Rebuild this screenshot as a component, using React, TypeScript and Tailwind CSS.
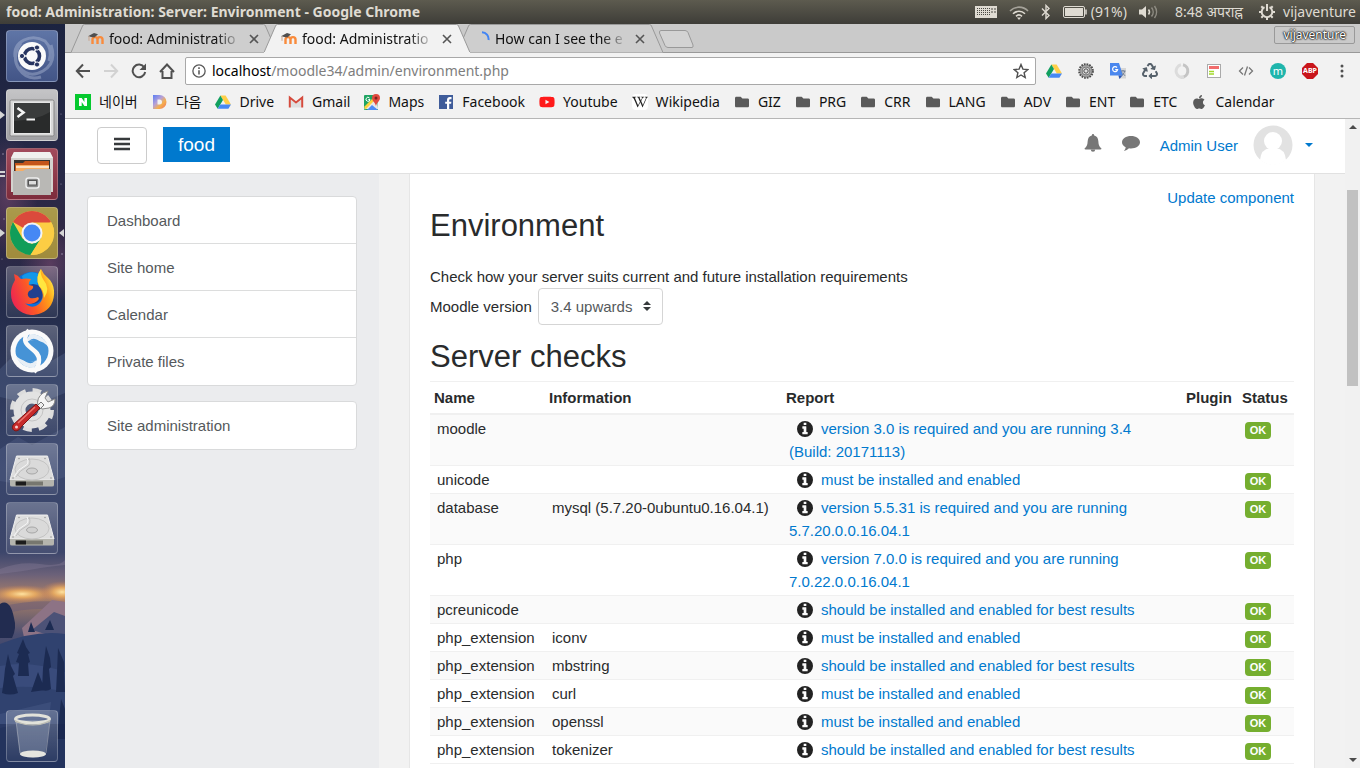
import type { ReactNode } from 'react'
import { FaYoutube, FaFolder, FaApple, FaRecycle, FaWikipediaW } from 'react-icons/fa'

// ── Data ──────────────────────────────────────────────
interface Check {
  name: string
  info?: string
  report: string
}

const CHECKS: Check[] = [
  { name: 'moodle', report: 'version 3.0 is required and you are running 3.4 (Build: 20171113)' },
  { name: 'unicode', report: 'must be installed and enabled' },
  { name: 'database', info: 'mysql (5.7.20-0ubuntu0.16.04.1)', report: 'version 5.5.31 is required and you are running 5.7.20.0.0.16.04.1' },
  { name: 'php', report: 'version 7.0.0 is required and you are running 7.0.22.0.0.16.04.1' },
  { name: 'pcreunicode', report: 'should be installed and enabled for best results' },
  { name: 'php_extension', info: 'iconv', report: 'must be installed and enabled' },
  { name: 'php_extension', info: 'mbstring', report: 'should be installed and enabled for best results' },
  { name: 'php_extension', info: 'curl', report: 'must be installed and enabled' },
  { name: 'php_extension', info: 'openssl', report: 'must be installed and enabled' },
  { name: 'php_extension', info: 'tokenizer', report: 'should be installed and enabled for best results' },
]

const SIDE_LINKS = ['Dashboard', 'Site home', 'Calendar', 'Private files']

// ── Small brand icons ─────────────────────────────────
function NaverIcon() {
  return (
    <svg viewBox="0 0 16 16" className="size-4">
      <rect width="16" height="16" fill="#06c92f" />
      <path d="M4 4h2.7l2.7 4V4H12v8H9.4L6.700 8v4H4z" fill="#fff" />
    </svg>
  )
}

function DaumIcon() {
  return (
    <svg viewBox="0 0 16 16" className="size-4">
      <defs>
        <linearGradient id="daum" x1="0" y1="0" x2="1" y2="1">
          <stop offset="0" stopColor="#5a7ef5" />
          <stop offset=".4" stopColor="#b6a1d8" />
          <stop offset=".65" stopColor="#f5b04d" />
          <stop offset="1" stopColor="#f0705f" />
        </linearGradient>
      </defs>
      <path d="M1 1h6.500a7 7 0 0 1 0 14H1zM5.500 5.500v5h2a2.500 2.500 0 0 0 0-5z" fill="url(#daum)" fillRule="evenodd" />
    </svg>
  )
}

function DriveIcon() {
  return (
    <svg viewBox="0 0 16 16" className="size-4">
      <path d="M5.400 1.500h5.200L16 10.500h-5.200z" fill="#ffcf48" />
      <path d="M5.400 1.500 8 6 2.700 14.800 0 10.500z" fill="#11a05f" />
      <path d="M5.300 10.500H16l-2.600 4.300H2.700z" fill="#4688f4" />
    </svg>
  )
}

function GmailIcon() {
  return (
    <svg viewBox="0 0 16 16" className="size-4">
      <path d="M1 3h14v10.500H1z" fill="#f3f3f3" />
      <path d="M3 13.500V6l5 4 5-4v7.500" fill="#dedede" />
      <path d="M1.800 13.500v-10L8 8.500l6.200-5v10" fill="none" stroke="#d54b3d" strokeWidth="2" />
    </svg>
  )
}

function MapsIcon() {
  return (
    <svg viewBox="0 0 16 16" className="size-4">
      <rect y="1" width="14" height="15" rx="1" fill="#1fa463" />
      <path d="M0 15 13 2l1 13z" fill="#e8e8e8" />
      <path d="m3 16 5-5 6 5z" fill="#4c8bf5" />
      <path d="M0 13 11 2l2 2L1.500 15.500z" fill="#fdd23c" />
      <path d="M12 0a4 4 0 0 1 4 4c0 3-3 4-4 8-1-4-4-5-4-8a4 4 0 0 1 4-4z" fill="#e04a3f" />
      <circle cx="12" cy="4" r="1.500" fill="#7c231d" />
      <path d="M5.500 4a2 2 0 1 0 .5 1.500H4.300" fill="none" stroke="#fff" />
    </svg>
  )
}

function FacebookIcon() {
  return (
    <svg viewBox="0 0 16 16" className="size-4">
      <rect x="1" y="1" width="14" height="14" fill="#3f5c9a" />
      <path d="M13.500 5.300h-1.400c-.6 0-.9.300-.9.900v1.500h2.200l-.3 2.100h-1.900V15H9V9.800H7.200V7.700H9V6c0-1.900 1.100-2.900 2.800-2.900h1.700z" fill="#fff" />
    </svg>
  )
}

function MoodleIcon() {
  return (
    <svg viewBox="0 0 16 16" className="size-4">
      <path d="M4.500 13V8.600a2.500 2.500 0 0 1 5 0V13m0-4.400a2.500 2.500 0 0 1 5 0V13" fill="none" stroke="#f98b3c" strokeWidth="2.400" />
      <path d="M0 5.200 6 2l4 1.200-3.600 3.300-3-.5z" fill="#4f4f4f" />
      <path d="M1 5.200v4.600" stroke="#c9a48d" />
    </svg>
  )
}

function TranslateIcon() {
  return (
    <svg viewBox="0 0 16 16" className="size-4">
      <path d="M6 5h10v10.500H9z" fill="#d6d6d6" />
      <path d="M0 0h9l4 12.500H0z" fill="#4a87ee" />
      <path d="m8.500 12.500 4 0-3 3.500z" fill="#2a56b5" />
      <path d="M7 4.500a2.500 2.500 0 1 0 .6 2.100H5.200" fill="none" stroke="#fff" strokeWidth="1.200" />
      <path d="M11 8h4.500M13 7v1m1.800 0c-.5 2-1.700 3.500-3.100 4.500m.5-3 2.800 3.300" stroke="#6d7b91" fill="none" />
    </svg>
  )
}

const BOOKMARKS: { label: string; icon?: ReactNode }[] = [
  { label: '네이버', icon: <NaverIcon /> },
  { label: '다음', icon: <DaumIcon /> },
  { label: 'Drive', icon: <DriveIcon /> },
  { label: 'Gmail', icon: <GmailIcon /> },
  { label: 'Maps', icon: <MapsIcon /> },
  { label: 'Facebook', icon: <FacebookIcon /> },
  { label: 'Youtube', icon: <FaYoutube className="size-4 text-[#ff1a1a]" /> },
  { label: 'Wikipedia', icon: <FaWikipediaW className="size-4 rounded-sm bg-white text-[#222]" /> },
  { label: 'GIZ' },
  { label: 'PRG' },
  { label: 'CRR' },
  { label: 'LANG' },
  { label: 'ADV' },
  { label: 'ENT' },
  { label: 'ETC' },
  { label: 'Calendar', icon: <FaApple className="size-4 text-[#5a5a5a]" /> },
]

// ── Desktop panel ─────────────────────────────────────
function Panel() {
  return (
    <header className="flex h-6 shrink-0 items-center bg-linear-to-b from-[#5d5b4f] to-[#3e3d38] pr-1 pl-1.5 text-[#dfdbd2]">
      <h1 className="flex-1 truncate text-sm font-bold">food: Administration: Server: Environment - Google Chrome</h1>
      <div className="flex items-center gap-3 text-sm whitespace-nowrap">
        <svg viewBox="0 0 22 14" className="h-3.5 w-[22px]">
          <rect y="1" width="22" height="12" fill="#dfdbd2" />
          <path d="M2 3.500h13M2 5.500h13M2 7.500h13M2 9.500h13" stroke="#4a4943" strokeDasharray="1 1" />
          <path d="M17 3v6M20 3v6" stroke="#4a4943" strokeDasharray="2 1" />
        </svg>
        <svg viewBox="0 0 20 16" className="h-4 w-5" fill="none" strokeWidth="1.600">
          <path d="M1 7a12.500 12.500 0 0 1 18 0" stroke="#a5a299" />
          <path d="M4 9.800a8.500 8.500 0 0 1 12 0M7 12.300a4.500 4.500 0 0 1 6 0" stroke="#dfdbd2" />
          <path d="m8 13.500 2 2.500 2-2.500z" fill="#dfdbd2" />
        </svg>
        <svg viewBox="0 0 10 16" className="h-4 w-2.5" fill="none" stroke="#dfdbd2" strokeWidth="1.400">
          <path d="m1 4.500 7 7L5 14.500v-13l3 3-7 7" />
        </svg>
        <span className="flex items-center gap-1">
          <svg viewBox="0 0 24 12" className="h-3 w-6">
            <rect x=".5" y=".5" width="21" height="11" rx="1.500" fill="none" stroke="#dfdbd2" />
            <rect x="2" y="2" width="18" height="8" fill="#dfdbd2" />
            <path d="M23 3.500v5" stroke="#dfdbd2" strokeWidth="1.500" />
          </svg>
          (91%)
        </span>
        <svg viewBox="0 0 20 14" className="h-3.5 w-5" fill="none">
          <path d="M0 4.500h3l4-3.500v12L3 9.500H0z" fill="#dfdbd2" />
          <path d="M9.500 4.500a4 4 0 0 1 0 5" stroke="#dfdbd2" strokeWidth="1.500" />
          <path d="M12.500 2.500a7 7 0 0 1 0 9M15.500 1a10 10 0 0 1 0 12" stroke="#8f8c83" strokeWidth="1.500" />
        </svg>
        <time className="mx-1">8:48 अपराह्न</time>
        <button type="button" className="flex items-center gap-2">
          <svg viewBox="0 0 16 16" className="size-4" fill="none" stroke="#dfdbd2">
            <path d="M5.500 3.200a5.300 5.300 0 1 0 5 0" strokeWidth="2" />
            <path d="M8 0v7" strokeWidth="2" />
            <path d="M0 8h2M14 8h2M2.300 2.300 4 4M13.700 2.300 12 4M2.300 13.700 4 12M13.700 13.700 12 12M8 14v2" strokeWidth="2" />
          </svg>
          vijaventure
        </button>
      </div>
    </header>
  )
}

// ── Launcher ──────────────────────────────────────────
function Wallpaper() {
  return (
    <svg viewBox="0 0 65 744" preserveAspectRatio="none" className="absolute inset-0 size-full">
      <defs>
        <linearGradient id="sky" x1="0" y1="0" x2="0" y2="1">
          <stop offset="0" stopColor="#1b2340" />
          <stop offset=".2" stopColor="#272947" />
          <stop offset=".28" stopColor="#302845" />
          <stop offset=".38" stopColor="#242c4b" />
          <stop offset=".6" stopColor="#38456b" />
          <stop offset=".71" stopColor="#3d466b" />
          <stop offset=".74" stopColor="#6b6179" />
          <stop offset=".77" stopColor="#a98069" />
          <stop offset=".82" stopColor="#4b4e70" />
          <stop offset=".9" stopColor="#27355f" />
          <stop offset="1" stopColor="#18264a" />
        </linearGradient>
        <radialGradient id="sun">
          <stop offset="0" stopColor="#ffe3a0" />
          <stop offset=".4" stopColor="#f3b25f" stopOpacity=".8" />
          <stop offset="1" stopColor="#c97f55" stopOpacity="0" />
        </radialGradient>
        <radialGradient id="nebula">
          <stop offset="0" stopColor="#6d4468" stopOpacity=".7" />
          <stop offset="1" stopColor="#6d4468" stopOpacity="0" />
        </radialGradient>
      </defs>
      <rect width="65" height="744" fill="url(#sky)" />
      <ellipse cx="8" cy="170" rx="30" ry="60" fill="url(#nebula)" />
      <ellipse cx="50" cy="240" rx="30" ry="40" fill="url(#nebula)" />
      <g fill="#cfc6e0" opacity=".6">
        <circle cx="3" cy="130" r=".8" />
        <circle cx="61" cy="160" r=".6" />
        <circle cx="4" cy="195" r=".7" />
        <circle cx="62" cy="230" r=".8" />
        <circle cx="2" cy="235" r=".6" />
        <circle cx="61" cy="90" r=".6" />
      </g>
      <path d="m0 345 12-12 10 8 14-14 12 12 17-10v40l-30 12-35-8z" fill="#4a5980" opacity=".5" />
      <path d="m0 425 18-12 14 8 33-18v50l-30 10-35-6z" fill="#5c6a92" opacity=".3" />
      <path d="M0 545q20-8 40-5t25-4v5q-20 2-30 4t-35 5z" fill="#857a96" opacity=".4" />
      <ellipse cx="22" cy="570" rx="34" ry="9" fill="url(#sun)" />
      <ellipse cx="62" cy="568" rx="22" ry="11" fill="url(#sun)" />
      <path d="M0 583q30-8 65-5v8q-35-4-65 5z" fill="#6f5f74" opacity=".6" />
      <path d="m22 604 30-28 13 2v36l-40 4z" fill="#8d7385" />
      <path d="m32 606 22-18 11 4v24z" fill="#4c5277" />
      <path d="M0 580q10-6 14 14 3 10-2 20H0z" fill="#222c50" />
      <path d="M0 620q35-14 65-10v134H0z" fill="#30426f" />
      <path d="M0 642q30-6 65 6v20q-30-8-65-4z" fill="#3f5283" opacity=".6" />
      <path d="m0 690 51-12-2 16-49 10z" fill="#40527f" opacity=".7" />
      <path d="m23 615 3 8 4 6-2 1 2 8-2 1 1 13H18l1-13-3-1 3-8-2-1zM8 630l3 12 4 8-2 2 5 17q-8 3-16 0l2-14 1-10zM46 622l4 12 1 9-2 2 2 20q-4 3-9 1l1-22zM58 624l6 14 1 30h-9l1-20zM38 648l4 10 3 8-14 2zM50 596l4 10h-9zM31 598l4 10h-7zM61 675l4 10v30H57z" fill="#1c2b52" />
      <path d="M0 700h65v44H0z" fill="#15234b" opacity=".5" />
    </svg>
  )
}

function Tile({ label, tint, children }: { label: string; tint?: string; children: ReactNode }) {
  return (
    <button
      type="button"
      aria-label={label}
      className={`relative flex size-[52px] shrink-0 items-center justify-center rounded border border-white/25 ${tint ?? 'bg-linear-to-b from-white/25 to-white/5'}`}
    >
      {children}
    </button>
  )
}

function HardDisk() {
  return (
    <svg viewBox="0 0 48 48" className="size-12">
      <path d="M8.500 11h31L46 35H2z" fill="#dedede" stroke="#efefef" />
      <path d="M2 35h44v5q0 1.500-2 1.500H4q-2 0-2-1.500z" fill="#b5b5ae" />
      <path d="M7 36.500h28v4H7z" fill="#77776f" />
      <path d="M8 36.500h10v4H8z" fill="#1c1c1c" />
      <ellipse cx="24" cy="24.500" rx="17" ry="10.500" fill="#dadada" stroke="#c4c4c4" />
      <path d="M19 13q3 6-3 8.500T6 32" fill="none" stroke="#f7f7f7" />
      <path d="M21 13q3 7-3 9.500T8 32" fill="none" stroke="#c0c0c0" />
      <ellipse cx="24" cy="26" rx="5.500" ry="3" fill="#d0d0d0" stroke="#a8a8a8" />
      <g fill="#999">
        <circle cx="11" cy="13.500" r=".8" />
        <circle cx="37" cy="13.500" r=".8" />
        <circle cx="5" cy="33" r=".8" />
        <circle cx="43" cy="33" r=".8" />
      </g>
    </svg>
  )
}

function RunningMark({ children }: { children: ReactNode }) {
  return <span className="absolute top-5 -left-[7px] text-[#d5d5d5]">{children}</span>
}

function Launcher() {
  const arrow = (
    <svg viewBox="0 0 5 10" className="h-2.5 w-[5px]">
      <path d="m0 1 5 4-5 4z" fill="currentColor" />
    </svg>
  )
  return (
    <nav aria-label="Launcher" className="relative flex w-[65px] shrink-0 flex-col gap-[7px] overflow-hidden px-1.5 pt-1.5 pb-1.5">
      <Wallpaper />
      <Tile label="Dash" tint="bg-linear-to-b from-[#5f75a6] to-[#435587]">
        <svg viewBox="0 0 50 50" className="size-[50px]">
          <g fill="none" stroke="#b9c4dd" strokeWidth="3" opacity=".4">
            <path d="M8 26C6 10 24 2 38 10q8 8 4 20" />
            <path d="M14 12Q4 26 12 38t22 8" />
            <path d="M12 36q10 12 24 4t8-26" />
          </g>
          <circle cx="25" cy="25" r="14" fill="#fafafa" />
          <circle cx="25" cy="25" r="7.500" fill="none" stroke="#273460" strokeWidth="3.600" />
          <path d="M25 25h-10M25 25l5-9M25 25l5 9" stroke="#fafafa" strokeWidth="1.500" />
          <circle cx="25" cy="25" r="4.500" fill="#fafafa" />
          <g fill="#273460" stroke="#fafafa">
            <circle cx="15" cy="25" r="2.600" />
            <circle cx="30" cy="16.500" r="2.600" />
            <circle cx="30" cy="33.500" r="2.600" />
          </g>
        </svg>
      </Tile>
      <Tile label="Terminal" tint="bg-linear-to-b from-[#c4c4c6] to-[#a0a0a3]">
        <svg viewBox="0 0 50 50" className="size-[50px]">
          <rect x="3" y="10" width="44" height="36" rx="1.500" fill="#d9d9d9" stroke="#858585" />
          <rect x="6" y="12.500" width="38" height="31" fill="#f1f1f1" />
          <rect x="7" y="13" width="36" height="30" fill="#292b2b" />
          <path d="M7 13h36v9Q30 30 7 31z" fill="#4b4e4d" opacity=".5" />
          <path d="m10.500 18 6 4.500-6 4.500" fill="none" stroke="#f5f5f5" strokeWidth="2.600" />
          <path d="M19.500 29.500h8.500" stroke="#f5f5f5" strokeWidth="2" />
        </svg>
        <RunningMark>{arrow}</RunningMark>
      </Tile>
      <Tile label="Files" tint="bg-linear-to-b from-[#a24b5c] to-[#7d2c3c]">
        <svg viewBox="0 0 50 50" className="size-[50px]">
          <path d="M7 3h36l3 6v34H4V9z" fill="#d4d3cf" />
          <path d="M7 3h36l3 6H4z" fill="#f0f0ee" />
          <path d="M7 11h36v12H7z" fill="#37332f" />
          <path d="M8 14h8l2-2h24v10H8z" fill="#c4551a" />
          <path d="M9 16h33v6H9z" fill="#f6ae66" />
          <path d="M9 18h33" stroke="#fff3e4" strokeWidth="1.500" />
          <path d="M6 22h10l3-2h25v26H6z" fill="#b9b8b5" />
          <rect x="19" y="29" width="13" height="10" rx="2.500" fill="#888" stroke="#eee" strokeWidth="1.500" />
          <rect x="21.500" y="31.500" width="8" height="4.500" fill="#ddd" stroke="#555" />
        </svg>
        <RunningMark>
          <svg viewBox="0 0 5 10" className="h-2.5 w-[5px]">
            <path d="M0 3h5M0 7h5" stroke="currentColor" strokeWidth="2" />
          </svg>
        </RunningMark>
      </Tile>
      <Tile label="Google Chrome" tint="bg-linear-to-b from-[#aa9a4b] to-[#a08b3c]">
        <svg viewBox="0 0 50 50" className="size-[50px]">
          <circle cx="25" cy="25" r="22" fill="#fccd44" />
          <path d="M25 25 6 14A22 22 0 0 1 44 14z" fill="#db4a3c" />
          <path d="M6 14a22 22 0 0 0 17.500 33L34.500 29.500 25 36 15.500 30.500z" fill="#109d59" />
          <path d="M25 14.500h19.500A22 22 0 0 1 23.500 47L34.300 30z" fill="#fccd44" />
          <circle cx="25" cy="25" r="10.500" fill="#f4f4f4" />
          <circle cx="25" cy="25" r="8.500" fill="#4688f4" />
        </svg>
        <RunningMark>{arrow}</RunningMark>
        <span className="absolute top-5 -right-[7px] rotate-180 text-[#d5d5d5]">{arrow}</span>
      </Tile>
      <Tile label="Firefox">
        <svg viewBox="0 0 50 50" className="size-[50px]">
          <defs>
            <linearGradient id="fox" x1="0" y1=".6" x2="1" y2=".2">
              <stop offset="0" stopColor="#ee2750" />
              <stop offset=".4" stopColor="#fb5a26" />
              <stop offset=".75" stopColor="#ffa318" />
              <stop offset="1" stopColor="#fff24a" />
            </linearGradient>
          </defs>
          <circle cx="25" cy="24" r="19" fill="#0a70dd" />
          <path d="M15 9q10-7 18-1l-3 11-12 2z" fill="#18b3f2" opacity=".6" />
          <circle cx="26" cy="27" r="10" fill="#22408f" />
          <path d="M34 2q2 5 7 9c7 6 8 18 3 27-5 8-14 10-20 10C12 47 4 38 4 27c0-7 2-10 4-14l-1-6q4 1 7 5 5-1 10 0-3 4-2 6l4 1q1 3-4 5-3 4 1 7 4 1 8-1 3 2-4 6-6 2-9 0 7 7 14 1c6-6 4-12 0-18q-4-9 2-17z" fill="url(#fox)" />
          <path d="M34 2q-6 8-2 17 5 4 5 12 7-9-1-19-3-5-2-10z" fill="#ffe63f" />
        </svg>
      </Tile>
      <Tile label="Simplenote">
        <svg viewBox="0 0 50 50" className="size-[50px]">
          <circle cx="25" cy="25" r="21.500" fill="#fafafa" />
          <circle cx="25" cy="25" r="16.500" fill="#4693d6" />
          <path d="M22 4C9 22 33 21 32 34q0 6-5 12" fill="none" stroke="#fafafa" strokeWidth="4.500" />
          <path d="M7 27q8 12 25 7l-5 8q-14 0-20-15zM43 23q-8-12-25-7l5-8q14 0 20 15z" fill="#fafafa" opacity=".9" />
          <path d="M14 31q6 5 14 4-6 6-14-4zM36 19q-6-5-14-4 6-6 14 4z" fill="#4693d6" />
        </svg>
      </Tile>
      <Tile label="System Settings">
        <svg viewBox="0 0 50 50" className="size-[50px]">
          <circle cx="25" cy="25" r="18.500" fill="none" stroke="#dcdcdc" strokeWidth="7" strokeDasharray="8 6.530" />
          <circle cx="25" cy="25" r="12.500" fill="none" stroke="#e2e2e2" strokeWidth="12" />
          <circle cx="25" cy="25" r="11" fill="none" stroke="#c4c4c4" />
          <path d="M31 21q-2-8 5-13l5-2-3 7 3 4 7-3q0 7-6 9l-7 1z" fill="#f5f5f5" stroke="#888" />
          <path d="m34 17-5 5-1 4 4-1 5-5z" fill="#eee" stroke="#777" />
          <path d="M29 19 6 40q-2 5 3 6 3 0 6-5l18-18z" fill="#c62a2a" stroke="#801414" />
          <path d="M28 22 11 38" stroke="#eb7770" strokeWidth="1.500" />
          <circle cx="9.500" cy="42" r="1.500" fill="#f5d0d0" />
        </svg>
      </Tile>
      <Tile label="Disk 1"><HardDisk /></Tile>
      <Tile label="Disk 2"><HardDisk /></Tile>
      <div className="flex-1" />
      <Tile label="Trash">
        <svg viewBox="0 0 50 50" className="size-[50px]">
          <path d="M9 9h34l-5 35q-12 5-25 0z" fill="#aab4c8" opacity=".35" />
          <ellipse cx="26" cy="43" rx="13" ry="3.500" fill="#e5e5df" />
          <path d="m9 10 4 32M43 10l-4 32" stroke="#dcdcdc" opacity=".4" />
          <ellipse cx="25.500" cy="8" rx="17" ry="4" fill="none" stroke="#e2e2da" strokeWidth="3" />
          <path d="M8 9q17 9 35 0v2q-17 7-35 0z" fill="#bdbdb4" />
        </svg>
      </Tile>
    </nav>
  )
}

// ── Browser chrome ────────────────────────────────────
function Tab({ title, icon, active }: { title: string; icon: ReactNode; active?: boolean }) {
  return (
    <div role="tab" aria-selected={!!active} className={`relative -mr-[13px] flex h-[29px] w-[206px] items-center pr-[17px] pl-[17px] ${active ? 'z-10' : ''}`}>
      <svg viewBox="0 0 206 29" className="absolute inset-0 size-full">
        <path d="M0 28.500 11.500 2q.5-1.500 2-1.500h179q1.500 0 2 1.500L206 28.500" fill={active ? '#f2f2f2' : '#cecece'} stroke="#999" />
        {active && <path d="M0 29h206" stroke="#f2f2f2" strokeWidth="2" />}
      </svg>
      <span className="relative size-4 shrink-0">{icon}</span>
      <span className="relative ml-[5px] flex-1 mask-r-from-80% text-sm whitespace-nowrap text-[#111]">{title}</span>
      <button type="button" aria-label="Close tab" className="relative ml-1.5 flex size-3 items-center justify-center">
        <svg viewBox="0 0 10 10" className="size-2.5">
          <path d="m1 1 8 8M9 1 1 9" stroke="#555" strokeWidth="1.600" />
        </svg>
      </button>
    </div>
  )
}

function TabStrip() {
  return (
    <div className="flex h-[29px] items-start border-b border-[#999] bg-[#cacaca]">
      <div role="tablist" className="flex pl-1.5">
        <Tab title="food: Administratio" icon={<MoodleIcon />} />
        <Tab title="food: Administratio" icon={<MoodleIcon />} active />
        <Tab
          title="How can I see the e"
          icon={
            <svg viewBox="0 0 16 16" className="size-4">
              <path d="M8 1.200A6.800 6.800 0 0 1 14.500 9" fill="none" stroke="#4285f4" strokeWidth="2" />
            </svg>
          }
        />
      </div>
      <button type="button" aria-label="New tab" className="mt-1.5 ml-2">
        <svg viewBox="0 0 36 18" className="h-[18px] w-9">
          <path d="M3 .5h24q2 0 3 2l5 12.500q.5 2.500-1 2.500H10q-2 0-3-2L1.500 3Q1 .5 3 .5z" fill="#d3d3d3" stroke="#999" />
        </svg>
      </button>
      <div className="flex-1" />
      <button type="button" className="mt-0.5 mr-[5px] h-[18px] rounded-xs border border-[#999] px-2 text-xs leading-4 text-white [text-shadow:0_0_1px_#000,0_0_2px_#000,0_0_2px_#000]">
        vijaventure
      </button>
    </div>
  )
}

function IconButton({ label, narrow, children }: { label: string; narrow?: boolean; children: ReactNode }) {
  return (
    <button type="button" aria-label={label} className={`flex h-7 shrink-0 items-center justify-center ${narrow ? 'w-7' : 'w-8'}`}>
      {children}
    </button>
  )
}

function Toolbar() {
  return (
    <div className="flex items-center bg-[#f2f2f2] pt-1 pr-0.5 pl-1">
      <IconButton label="Back" narrow>
        <svg viewBox="0 0 16 16" className="size-4" fill="none" stroke="#505050" strokeWidth="2">
          <path d="M15 8H2M8 1.500 1.800 8 8 14.500" />
        </svg>
      </IconButton>
      <IconButton label="Forward" narrow>
        <svg viewBox="0 0 16 16" className="size-4" fill="none" stroke="#d2d2d2" strokeWidth="2">
          <path d="M1 8h13M8 1.500 14.200 8 8 14.500" />
        </svg>
      </IconButton>
      <IconButton label="Reload" narrow>
        <svg viewBox="0 0 16 16" className="size-4" fill="none" stroke="#505050" strokeWidth="2">
          <path d="M13.300 4.500A6.300 6.300 0 1 0 14.200 9" />
          <path d="M15 .5V7H8.500z" fill="#505050" stroke="none" />
        </svg>
      </IconButton>
      <IconButton label="Home" narrow>
        <svg viewBox="0 0 16 16" className="size-4" fill="none" stroke="#505050" strokeWidth="2">
          <path d="M1 9 8 1.500 15 9M3.500 8v7h9V8" />
        </svg>
      </IconButton>
      <label className="ml-1 flex h-7 flex-1 items-center rounded-xs border border-[#a8a8a8] bg-white px-1.5">
        <svg viewBox="0 0 16 16" className="size-3.5 shrink-0" fill="none" stroke="#5a5a5a">
          <circle cx="8" cy="8" r="7" strokeWidth="1.500" />
          <path d="M8 7v5M8 3.800v1.800" strokeWidth="1.800" />
        </svg>
        <span className="relative ml-1.5 flex-1">
          <input aria-label="Address" defaultValue="localhost/moodle34/admin/environment.php" className="block w-full text-sm text-transparent caret-black outline-none" />
          <span aria-hidden="true" className="pointer-events-none absolute inset-0 text-sm text-[#7d7d7d]"><span className="text-black">localhost</span>/moodle34/admin/environment.php</span>
        </span>
        <svg viewBox="0 0 16 16" className="size-4 shrink-0" fill="none" stroke="#505050" strokeWidth="1.400">
          <path d="m8 1.500 1.900 4.600 4.900.4-3.700 3.200 1.100 4.800L8 12l-4.200 2.500 1.100-4.800L1.200 6.500l4.900-.4z" />
        </svg>
      </label>
      <div className="ml-0.5 flex">
        <IconButton label="Google Drive"><DriveIcon /></IconButton>
        <IconButton label="Gear">
          <svg viewBox="0 0 16 16" className="size-4" fill="none">
            <circle cx="8" cy="8" r="6.800" stroke="#444" strokeWidth="2" strokeDasharray="1.700 1" />
            <circle cx="8" cy="8" r="4.800" stroke="#7d7d7d" strokeWidth="3.200" />
            <circle cx="8" cy="8" r="5" stroke="#b5b5b5" />
            <circle cx="8" cy="8" r="2.200" fill="#ddd" stroke="#444" />
          </svg>
        </IconButton>
        <IconButton label="Translate"><TranslateIcon /></IconButton>
        <IconButton label="Recycle"><FaRecycle className="size-4 text-[#56616b]" /></IconButton>
        <IconButton label="Session">
          <svg viewBox="0 0 16 16" className="size-4" fill="none" strokeWidth="3">
            <path d="M9 1.800a6.300 6.300 0 0 1-2 12.400" stroke="#c4c4c4" />
            <path d="M10 14.200A6.300 6.300 0 0 1 7 1.800" stroke="#dcdcdc" />
          </svg>
        </IconButton>
        <IconButton label="Page tool">
          <svg viewBox="0 0 16 16" className="size-4">
            <rect x="1.500" y="1.500" width="13" height="13" fill="#fff" stroke="#aaa" />
            <path d="M3 3h10v3H3z" fill="#f26d6d" />
            <path d="M3 8.500h5M3 11h5" stroke="#a3d92a" strokeWidth="1.500" />
          </svg>
        </IconButton>
        <IconButton label="Source">
          <svg viewBox="0 0 16 16" className="size-4" fill="none" stroke="#777" strokeWidth="1.300">
            <path d="M5 4.500 1.500 8 5 11.500M11 4.500 14.500 8 11 11.500M9.500 3.500l-3 9" />
          </svg>
        </IconButton>
        <IconButton label="Momentum">
          <span className="flex size-4 items-center justify-center rounded-full bg-[#1fb5ac] pb-0.5 text-[11px] leading-none text-white">m</span>
        </IconButton>
        <IconButton label="Adblock Plus">
          <span className="relative flex size-4 items-center justify-center">
            <svg viewBox="0 0 16 16" className="absolute inset-0 size-4">
              <path d="M5 0h6l5 5v6l-5 5H5l-5-5V5z" fill="#c9151b" />
            </svg>
            <span className="relative text-[7px] font-bold text-white">ABP</span>
          </span>
        </IconButton>
        <IconButton label="Menu">
          <svg viewBox="0 0 4 16" className="h-4 w-1" fill="#505050">
            <circle cx="2" cy="3" r="1.500" />
            <circle cx="2" cy="8" r="1.500" />
            <circle cx="2" cy="13" r="1.500" />
          </svg>
        </IconButton>
      </div>
    </div>
  )
}

function BookmarksBar() {
  return (
    <nav aria-label="Bookmarks" className="flex h-[34px] items-center gap-3.5 border-b border-[#b6b6b6] bg-[#f2f2f2] pl-2.5 text-sm whitespace-nowrap text-[#111]">
      {BOOKMARKS.map(({ label, icon }) => (
        <a key={label} href="#" className="flex items-center gap-2">
          <span className="flex size-4 items-center justify-center">
            {icon ?? <FaFolder className="size-[14px] text-[#5a5a5a]" />}
          </span>
          {label}
        </a>
      ))}
    </nav>
  )
}

// ── Moodle page ───────────────────────────────────────
function SiteNav() {
  return (
    <header className="flex h-[55px] shrink-0 items-start border-b border-[#e1e1e1] bg-white pt-2 pr-8 pl-8">
      <button type="button" aria-label="Side panel" className="flex h-[37px] w-[50px] items-center justify-center rounded border border-[#ccc] pb-1">
        <svg viewBox="0 0 16 14" className="h-3.5 w-4">
          <path d="M.500 2h15M.5 7h15M.5 12h15" stroke="#373a3c" strokeWidth="2.400" strokeLinecap="round" />
        </svg>
      </button>
      <a href="#" className="ml-4 flex h-[35px] items-center bg-[#0079ce] px-[15px] text-[19px] text-white">food</a>
      <div className="flex-1" />
      <div className="flex h-9 items-center">
        <button type="button" aria-label="Notifications" className="mr-5 mb-1">
          <svg viewBox="0 0 18 18" className="size-[18px]" fill="#777">
            <path d="M9 0q1.200 0 1.200 1.400Q14 2.300 14.300 7q.2 5.500 3.200 7.500 0 1-1.200 1H1.700q-1.200 0-1.200-1 3-2 3.200-7.500Q4 2.300 7.800 1.400 7.800 0 9 0z" />
            <path d="M6.800 15.500h4.400a2.200 2.200 0 0 1-4.400 0z" />
          </svg>
        </button>
        <button type="button" aria-label="Messages" className="mr-5 mb-1">
          <svg viewBox="0 0 18 18" className="size-[18px]" fill="#777">
            <path d="M9 2c5 0 9 2.700 9 6.300s-4 6.200-9 6.200q-1 0-2-.2-2 2-5 2.700 1.500-1.500 1.700-3.700Q0 11.500 0 8.300C0 4.700 4 2 9 2z" />
          </svg>
        </button>
        <button type="button" className="flex items-center text-[#0079ce]">
          Admin User
          <svg viewBox="0 0 40 40" className="ml-[15px] size-10">
            <circle cx="20" cy="20" r="19.500" fill="#e2e2e2" />
            <circle cx="20" cy="16" r="9" fill="#fff" />
            <path d="M7 35q1-11 10-12h6q9 1 10 12-6 5-13 5T7 35z" fill="#fff" />
          </svg>
          <svg viewBox="0 0 8 4" className="ml-3 h-1 w-2">
            <path d="M0 0h8L4 4z" fill="#0079ce" />
          </svg>
        </button>
      </div>
    </header>
  )
}

function SideDrawer() {
  return (
    <aside className="flex w-[314px] shrink-0 flex-col gap-[15px] bg-[#ebecee] px-[22px] pt-[22px] text-[#55595c]">
      <ul className="rounded border border-[#d9dadb] bg-white">
        {SIDE_LINKS.map((label) => (
          <li key={label} className="border-b border-[#dcdddd] last:border-transparent">
            <a href="#" className="flex h-[46px] items-center px-[19px]">{label}</a>
          </li>
        ))}
      </ul>
      <ul className="rounded border border-[#d9dadb] bg-white">
        <li>
          <a href="#" className="flex h-[47px] items-center px-[19px]">Site administration</a>
        </li>
      </ul>
    </aside>
  )
}

function InfoIcon() {
  return (
    <svg viewBox="0 128 1536 1536" className="mx-2 -mt-0.5 inline size-4" fill="#222">
      <path d="M1024 1376v-160q0-14-9-23t-23-9h-96v-512q0-14-9-23t-23-9h-320q-14 0-23 9t-9 23v160q0 14 9 23t23 9h96v320h-96q-14 0-23 9t-9 23v160q0 14 9 23t23 9h448q14 0 23-9t9-23zm-128-896v-160q0-14-9-23t-23-9h-192q-14 0-23 9t-9 23v160q0 14 9 23t23 9h192q14 0 23-9t9-23zm640 416a768 768 0 1 1-1536 0 768 768 0 1 1 1536 0z" fillRule="evenodd" />
    </svg>
  )
}

function ChecksTable() {
  return (
    <table className="mt-[7px] w-full table-fixed border-t border-[#f0f0f0] text-left">
      <colgroup>
        <col className="w-[115px]" />
        <col className="w-[237px]" />
        <col />
        <col className="w-14" />
        <col className="w-14" />
      </colgroup>
      <thead>
        <tr className="h-8 border-b-2 border-[#f0f0f0]">
          <th scope="col" className="px-1">Name</th>
          <th scope="col" className="px-1">Information</th>
          <th scope="col" className="px-1">Report</th>
          <th scope="col" className="px-1">Plugin</th>
          <th scope="col" className="px-1">Status</th>
        </tr>
      </thead>
      <tbody>
        {CHECKS.map((check, i) => (
          <tr key={i} className="border-b border-[#f0f0f0] align-top odd:bg-[#fafafa]">
            <td className="px-[7px] py-0.5">{check.name}</td>
            <td className="px-[7px] py-0.5 whitespace-nowrap">{check.info}</td>
            <td className="px-[7px] py-0.5">
              <InfoIcon />
              <a href="#" className="text-[#0079ce]">{check.report}</a>
            </td>
            <td />
            <td className="px-[7px] pt-[7px]">
              <span className="block w-[26px] rounded bg-[#75ae2f] text-center text-[11px] leading-[17px] font-bold text-white">OK</span>
            </td>
          </tr>
        ))}
      </tbody>
    </table>
  )
}

function EnvironmentPage() {
  return (
    <main className="flex-1 bg-[#f2f2f2] px-[30px]">
      <section className="min-h-full border-x border-[#e6e6e6] bg-white px-5 pt-3">
        <p className="text-right"><a href="#" className="text-[#0079ce]">Update component</a></p>
        <h2 className="text-[31px] leading-[34px]">Environment</h2>
        <p className="mt-[22px]">Check how your server suits current and future installation requirements</p>
        <div className="flex items-center">
          <label htmlFor="version">Moodle version</label>
          <span className="relative ml-1.5">
            <select id="version" className="block h-[37px] w-[125px] appearance-none rounded border border-[#d5d5d5] bg-white pl-3 text-[#55595c]">
              <option>3.4 upwards</option>
            </select>
            <svg viewBox="0 0 8 10" className="pointer-events-none absolute top-[13px] right-3 h-2.5 w-2">
              <path d="m4 0 4 4H0zM4 10 0 6h8z" fill="#373a3c" />
            </svg>
          </span>
        </div>
        <h2 className="mt-[15px] text-[31px] leading-[34px]">Server checks</h2>
        <ChecksTable />
      </section>
    </main>
  )
}

function ScrollTrack() {
  return (
    <div className="flex w-[15px] shrink-0 flex-col items-center bg-[#f1f1f1] py-1.5">
      <svg viewBox="0 0 8 4" className="h-1 w-2"><path d="m4 0 4 4H0z" fill="#4c4c4c" /></svg>
      <div className="mt-[61px] h-[196px] w-[11px] bg-[#c1c1c1]" />
      <div className="flex-1" />
      <svg viewBox="0 0 8 4" className="h-1 w-2"><path d="M0 0h8L4 4z" fill="#4c4c4c" /></svg>
    </div>
  )
}

export default function App() {
  return (
    <div className="flex h-screen flex-col overflow-hidden font-['Noto_Sans','Noto_Sans_CJK_KR',sans-serif]">
      <Panel />
      <div className="flex min-h-0 flex-1">
        <Launcher />
        <div className="flex min-w-0 flex-1 flex-col">
          <TabStrip />
          <Toolbar />
          <BookmarksBar />
          <div className="flex min-h-0 flex-1 font-['Liberation_Sans',sans-serif] text-[15px] leading-[23px] text-[#292b2c]">
            <div className="flex min-w-0 flex-1 flex-col">
              <SiteNav />
              <div className="flex min-h-0 flex-1 overflow-hidden">
                <SideDrawer />
                <EnvironmentPage />
              </div>
            </div>
            <ScrollTrack />
          </div>
        </div>
      </div>
    </div>
  )
}
